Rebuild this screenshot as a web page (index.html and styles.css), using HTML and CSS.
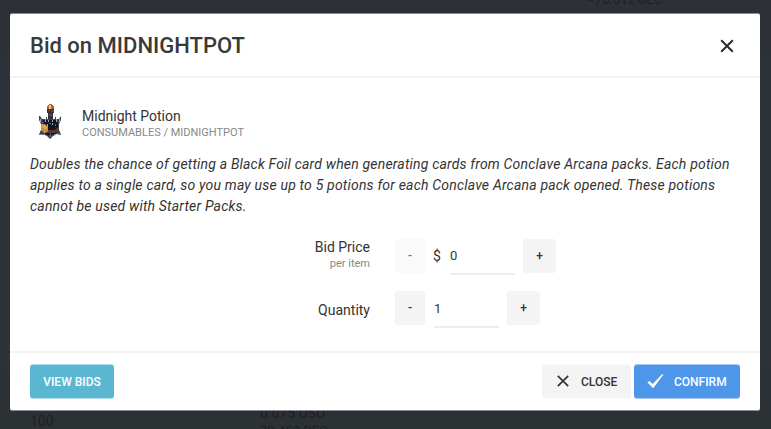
FILE: index.html
```html
<!DOCTYPE html>
<html lang="en">
<head>
<meta charset="utf-8">
<title>Bid on MIDNIGHTPOT</title>
<link rel="stylesheet" href="styles.css">
</head>
<body>
<div class="page" aria-hidden="true">
  <div class="page-top">~70.012 DEC</div>
  <div class="page-row"><span class="amount">100</span><span class="price">0.075 USD<br><small>70.452 DEC</small></span></div>
</div>
<section class="modal">
  <header class="modal-header">
    <h1>Bid on MIDNIGHTPOT</h1>
    <svg class="dismiss" viewBox="0 0 14 14"><path d="M1.2 1.2 12.8 12.8M12.8 1.2 1.2 12.8"/></svg>
  </header>
  <main class="modal-body">
    <div class="item">
      <svg class="potion" viewBox="0 0 28 38">
        <path fill="#3a4258" d="M3 14h1l2 3h4v-2h1v2h8v-2h1v2h3l2-3v4l-2 4v6l1 2 1 3-5-1-3 2-3 3-3-3-3-2-5 1 1-3 1-2v-6l-2-4z"/>
        <path fill="#111522" d="M7 18h14l1 4v6l-3 5h-9l-3-5v-6z"/>
        <path fill="#35303d" d="M11 7h7v4h-1v6h-5v-6h-1z"/>
        <path fill="#71412f" d="M12 8h2v1h-2zM15 8h3v2h-3zM13 12h3v2h-3z"/>
        <path fill="#a9653f" d="M11 4h1V3h1V2h3v1h1v1h1v3h-7z"/>
        <path fill="#f4cf62" d="M13 3h2v4h-2z"/><path fill="#d34c39" d="M15 4h2v2h-2z"/>
        <path fill="#9babb9" d="M4 17h1v3H4zM9 17h1v3H9zM12 18h1v2h-1zM16 18h1v2h-1zM20 17h1v3h-1zM23 17h1v3h-1zM11 22h1v4h-1zM16 21h1v2h-1zM9 33h1v1H9zM18 32h1v2h-1z"/>
        <path fill="#53657c" d="M6 20h2v1H6zM13 21h2v1h-2zM19 22h1v2h-1zM14 29h1v6h-1zM6 32h2v1H6zM21 31h2v1h-2z"/>
        <path fill="#60382d" d="M11 28h8l4-4v4l-4 3h-8z"/>
        <path fill="#c58c4c" d="M5 22h4l3 3v4l-2 2H8l-3-3z"/>
        <path fill="#e0a553" d="M6 23h3v1h2v3H8v-1H6z"/>
      </svg>
      <div>
        <div class="item-name">Midnight Potion</div>
        <div class="item-path">CONSUMABLES / MIDNIGHTPOT</div>
      </div>
    </div>
    <p class="description">Doubles the chance of getting a Black Foil card when generating cards from Conclave Arcana packs. Each potion<br>applies to a single card, so you may use up to 5 potions for each Conclave Arcana pack opened. These potions<br>cannot be used with Starter Packs.</p>
    <div class="field">
      <div class="label"><span class="label-main">Bid Price</span><small>per item</small></div>
      <div class="step minus disabled">-</div>
      <span class="currency">$</span>
      <div class="value">0</div>
      <div class="step plus">+</div>
    </div>
    <div class="field quantity">
      <div class="label"><span class="label-main">Quantity</span></div>
      <div class="step minus">-</div>
      <div class="value">1</div>
      <div class="step plus">+</div>
    </div>
  </main>
  <footer class="modal-footer">
    <div class="btn view"><span>VIEW BIDS</span></div>
    <div class="btn close"><svg viewBox="0 0 12 12"><path d="M.8.8 11.2 11.2M11.2.8.8 11.2"/></svg><span>CLOSE</span></div>
    <div class="btn confirm"><svg viewBox="0 0 17 15"><path d="M.4 8.5 2.6 6.9 5.7 10 14.8.6 16.6.2 6.2 14.3z"/></svg><span>CONFIRM</span></div>
  </footer>
</section>
</body>
</html>
```
FILE: styles.css
```css
* { box-sizing: border-box; }
body { margin: 0; width: 771px; height: 429px; overflow: hidden; background: #2d3138; font-family: Roboto, sans-serif; color: #333; }
.page { height: 429px; display: flex; flex-direction: column; justify-content: space-between; overflow: hidden; color: #1d2025; font-size: 13px; background: linear-gradient(#2c3137, #2c3035 30px, #2d3139 70px, #2d3138 360px, #2c3134 429px); }
.page-top { height: 10px; line-height: 10px; margin-top: -5px; padding-left: 586px; }
.page-row { height: 24px; display: flex; padding-left: 30px; line-height: 17px; font-size: 14px; }
.amount { width: 230px; padding-top: 8px; }
.price small { font-size: 13px; }
.modal { position: absolute; left: 10px; top: 14px; width: 750px; height: 396px; background: #fff; border-radius: 2px; box-shadow: 0 -1px 0 rgba(255,255,255,.45), 0 1px 0 rgba(255,255,255,.45); display: flex; flex-direction: column; }
.modal-header { height: 64px; border-bottom: 2px solid #f3f3f3; display: flex; align-items: center; justify-content: space-between; padding: 0 26px 0 20px; }
h1 { margin: 2px 0 0; font-size: 22px; line-height: 26px; font-weight: 500; color: #393939; }
.dismiss { width: 14px; height: 14px; margin-top: 2px; fill: none; stroke: #272b32; stroke-width: 2; }
.modal-body { flex: 1; padding: 24px 20px 0; }
.item { display: flex; height: 38px; align-items: flex-start; }
.potion { width: 28px; height: 38px; margin: 0 18px 0 6px; }
.item-name { margin-top: 6px; font-size: 14px; line-height: 17px; }
.item-path { margin-top: 1px; font-size: 11px; line-height: 14px; color: #888; }
.description { margin: 14px 0 0; font-size: 14px; line-height: 21px; letter-spacing: .19px; font-style: italic; white-space: nowrap; }
.field { display: flex; height: 36px; margin-top: 22px; align-items: flex-start; }
.label { width: 340px; margin-right: 25px; text-align: right; font-size: 14px; line-height: 17px; }
.label-main { display: block; }
.label small { display: block; margin-top: 1px; font-size: 11px; line-height: 14px; color: #888; }
.step { height: 34px; border-radius: 3px; background: #f4f4f4; text-align: center; font-size: 12px; line-height: 34px; font-weight: 500; }
.minus { width: 30px; }
.plus { width: 33px; margin-left: 8px; }
.disabled { background: #fafafa; color: #777; }
.currency { width: 17px; margin-left: 8px; font-size: 14px; line-height: 34px; }
.value { width: 65px; height: 36px; font-size: 13px; line-height: 34px; border-bottom: 2px solid #ededed; }
.quantity { margin-top: 16px; height: 37px; }
.quantity .label { padding-top: 11px; }
.quantity .step { line-height: 35px; }
.quantity .value { height: 37px; margin-left: 9px; line-height: 36px; }
.modal-footer { height: 59px; border-top: 2px solid #f3f3f3; padding: 12px 20px 0; display: flex; }
.btn { height: 33px; border-radius: 3px; font-size: 12px; line-height: 35px; font-weight: 500; display: flex; align-items: center; }
.btn span { padding-top: 1px; }
.view { width: 84px; justify-content: center; background: #5bb7d1; color: #fff; margin-right: auto; box-shadow: 0 -1px 0 #aedce8, 0 1px 0 #aedce8; }
.close { width: 89px; background: #f4f4f4; padding-left: 15px; margin-right: 3px; box-shadow: 0 -1px 0 #fafafa, 0 1px 0 #fafafa; }
.close svg { width: 12px; height: 12px; margin: -1px 12px 0 0; fill: none; stroke: #333; stroke-width: 1.7; }
.confirm { width: 106px; background: #4e96ea; color: #fff; padding-left: 13px; box-shadow: 0 -1px 0 #a6caf5, 0 1px 0 #a6caf5; }
.confirm svg { width: 17px; height: 15px; margin: -1px 10px 0 0; fill: #fff; }
```
